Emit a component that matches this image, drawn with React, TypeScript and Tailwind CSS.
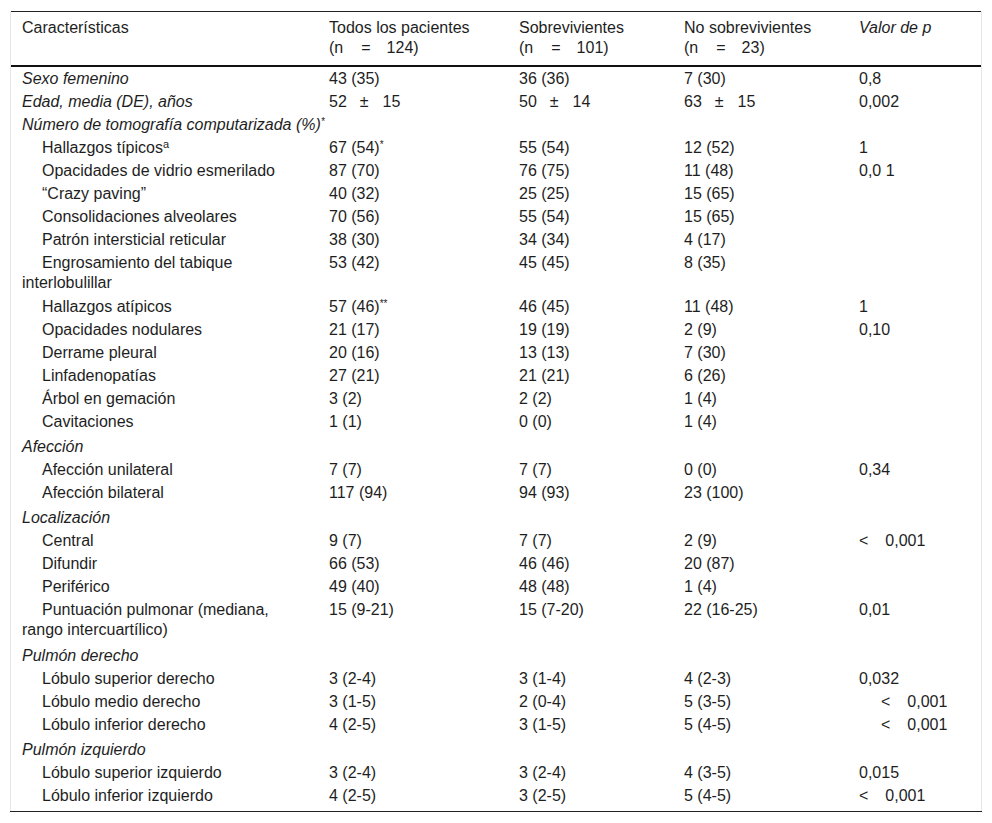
import React from 'react';

type Row = {
  label: React.ReactNode;
  indent?: boolean;
  italic?: boolean;
  span?: boolean;
  gapTop?: boolean;
  twoLine?: boolean;
  cells?: React.ReactNode[];
};

// wide gaps as in "(n = 124)" / "52 ± 15" / "< 0,001"
const Sp = ({ w }: { w: string }) => <span className={`inline-block ${w}`} />;

const N = ({ v }: { v: string }) => (
  <>
    (n<Sp w="w-[18px]" />=<Sp w="w-[16px]" />
    {v})
  </>
);

const PM = ({ a, b }: { a: string; b: string }) => (
  <>
    {a}
    <Sp w="w-[13px]" />±<Sp w="w-[14px]" />
    {b}
  </>
);

const Lt = ({ shift }: { shift?: boolean }) => (
  <span className={shift ? 'pl-[22px]' : ''}>
    &lt;
    <Sp w="w-[17px]" />
    0,001
  </span>
);

const Star = ({ s }: { s: string }) => <sup className="text-[10px] leading-none">{s}</sup>;

const rows: Row[] = [
  { label: 'Sexo femenino', italic: true, cells: ['43 (35)', '36 (36)', '7 (30)', '0,8'] },
  {
    label: 'Edad, media (DE), años',
    italic: true,
    cells: [<PM a="52" b="15" />, <PM a="50" b="14" />, <PM a="63" b="15" />, '0,002'],
  },
  {
    label: (
      <>
        Número de tomografía computarizada (%)<Star s="*" />
      </>
    ),
    italic: true,
    span: true,
  },
  {
    label: (
      <>
        Hallazgos típicos<sup className="text-[11px] leading-none">a</sup>
      </>
    ),
    indent: true,
    cells: [
      <>
        67 (54)<Star s="*" />
      </>,
      '55 (54)',
      '12 (52)',
      '1',
    ],
  },
  { label: 'Opacidades de vidrio esmerilado', indent: true, cells: ['87 (70)', '76 (75)', '11 (48)', '0,0 1'] },
  { label: '“Crazy paving”', indent: true, cells: ['40 (32)', '25 (25)', '15 (65)', ''] },
  { label: 'Consolidaciones alveolares', indent: true, cells: ['70 (56)', '55 (54)', '15 (65)', ''] },
  { label: 'Patrón intersticial reticular', indent: true, cells: ['38 (30)', '34 (34)', '4 (17)', ''] },
  {
    label: 'Engrosamiento del tabique interlobulillar',
    indent: true,
    twoLine: true,
    cells: ['53 (42)', '45 (45)', '8 (35)', ''],
  },
  {
    label: 'Hallazgos atípicos',
    indent: true,
    cells: [
      <>
        57 (46)<Star s="**" />
      </>,
      '46 (45)',
      '11 (48)',
      '1',
    ],
  },
  { label: 'Opacidades nodulares', indent: true, cells: ['21 (17)', '19 (19)', '2 (9)', '0,10'] },
  { label: 'Derrame pleural', indent: true, cells: ['20 (16)', '13 (13)', '7 (30)', ''] },
  { label: 'Linfadenopatías', indent: true, cells: ['27 (21)', '21 (21)', '6 (26)', ''] },
  { label: 'Árbol en gemación', indent: true, cells: ['3 (2)', '2 (2)', '1 (4)', ''] },
  { label: 'Cavitaciones', indent: true, cells: ['1 (1)', '0 (0)', '1 (4)', ''] },
  { label: 'Afección', italic: true, span: true, gapTop: true },
  { label: 'Afección unilateral', indent: true, cells: ['7 (7)', '7 (7)', '0 (0)', '0,34'] },
  { label: 'Afección bilateral', indent: true, cells: ['117 (94)', '94 (93)', '23 (100)', ''] },
  { label: 'Localización', italic: true, span: true, gapTop: true },
  { label: 'Central', indent: true, cells: ['9 (7)', '7 (7)', '2 (9)', <Lt />] },
  { label: 'Difundir', indent: true, cells: ['66 (53)', '46 (46)', '20 (87)', ''] },
  { label: 'Periférico', indent: true, cells: ['49 (40)', '48 (48)', '1 (4)', ''] },
  {
    label: 'Puntuación pulmonar (mediana, rango intercuartílico)',
    indent: true,
    twoLine: true,
    cells: ['15 (9-21)', '15 (7-20)', '22 (16-25)', '0,01'],
  },
  { label: 'Pulmón derecho', italic: true, span: true, gapTop: true },
  { label: 'Lóbulo superior derecho', indent: true, cells: ['3 (2-4)', '3 (1-4)', '4 (2-3)', '0,032'] },
  { label: 'Lóbulo medio derecho', indent: true, cells: ['3 (1-5)', '2 (0-4)', '5 (3-5)', <Lt shift />] },
  { label: 'Lóbulo inferior derecho', indent: true, cells: ['4 (2-5)', '3 (1-5)', '5 (4-5)', <Lt shift />] },
  { label: 'Pulmón izquierdo', italic: true, span: true, gapTop: true },
  { label: 'Lóbulo superior izquierdo', indent: true, cells: ['3 (2-4)', '3 (2-4)', '4 (3-5)', '0,015'] },
  { label: 'Lóbulo inferior izquierdo', indent: true, cells: ['4 (2-5)', '3 (2-5)', '5 (4-5)', <Lt />] },
];

export default function App() {
  return (
    <div
      className="min-h-[823px] w-[992px] bg-white pt-[11px] text-[16px] leading-[20px] text-[#1e1e1e]"
      style={{ fontFamily: '"Liberation Sans", Arial, sans-serif' }}
    >
      <div className="mx-[10px] border-x border-[#e6e6e6]">
        <table className="w-full table-fixed border-collapse">
          <colgroup>
            <col className="w-[307px]" />
            <col className="w-[190px]" />
            <col className="w-[165px]" />
            <col className="w-[175px]" />
            <col />
          </colgroup>
          <thead>
            <tr className="border-t border-b-2 border-t-[#222] border-b-[#111] align-top">
              <th className="px-[11px] pt-[6px] pb-[7px] text-left font-normal">Características</th>
              <th className="px-[11px] pt-[6px] pb-[7px] text-left font-normal">
                Todos los pacientes
                <br />
                <N v="124" />
              </th>
              <th className="px-[11px] pt-[6px] pb-[7px] text-left font-normal">
                Sobrevivientes
                <br />
                <N v="101" />
              </th>
              <th className="px-[11px] pt-[6px] pb-[7px] text-left font-normal">
                No sobrevivientes
                <br />
                <N v="23" />
              </th>
              <th className="px-[11px] pt-[6px] pb-[7px] text-left font-normal italic">Valor de p</th>
            </tr>
          </thead>
          <tbody>
            {rows.map((r, i) => {
              const pt = r.gapTop ? 'pt-[4px]' : 'pt-[2px]';
              const pb = r.twoLine ? 'pb-[2px]' : 'pb-[1px]';
              return (
                <tr key={i} className="align-top">
                  <td
                    colSpan={r.span ? 5 : 1}
                    className={`px-[11px] ${pt} ${pb} ${r.italic ? 'italic' : ''} ${r.indent ? 'indent-5' : ''}`}
                  >
                    {r.label}
                  </td>
                  {!r.span &&
                    r.cells?.map((c, j) => (
                      <td key={j} className={`px-[11px] ${pt} ${pb} whitespace-nowrap`}>
                        {c}
                      </td>
                    ))}
                </tr>
              );
            })}
          </tbody>
        </table>
        <div className="h-[4px]" />
      </div>
      <div className="mx-[10px] h-px bg-[#222]" />
    </div>
  );
}
